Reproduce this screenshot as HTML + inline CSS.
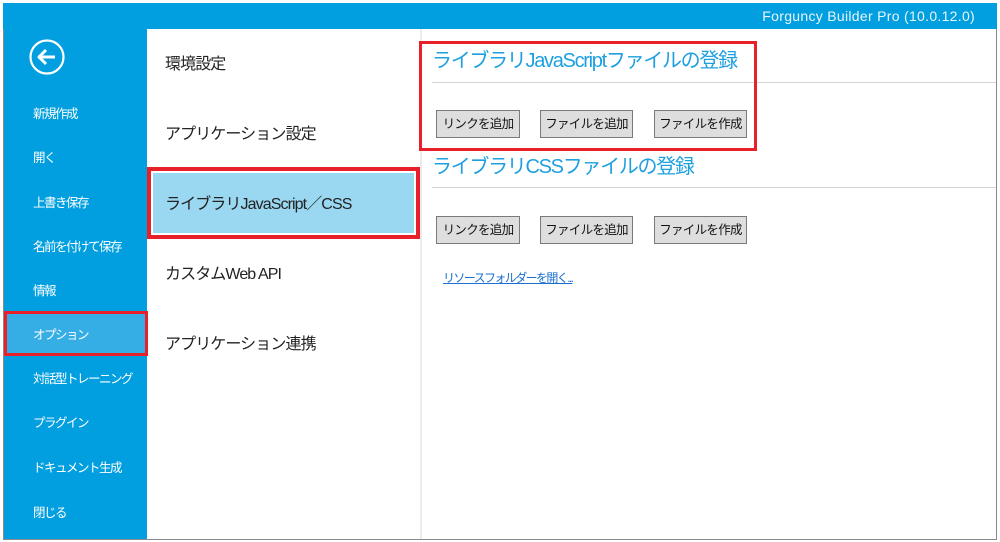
<!DOCTYPE html>
<html><head><meta charset="utf-8"><style>
*{margin:0;padding:0;box-sizing:border-box}
body{width:1000px;height:542px;background:#fff;position:relative;overflow:hidden;font-family:"Liberation Sans","Noto Sans CJK JP",sans-serif}
.frame{position:absolute;left:3px;top:3px;width:994px;height:537px;border:1px solid #8a8a8a;border-top:none;background:#fff}
.top{position:absolute;left:3px;top:3px;width:994px;height:26px;background:#019fdf}
.top span{position:absolute;right:22px;top:5px;color:#e8f6fd;font-size:14px;letter-spacing:0.3px}
.side{position:absolute;left:4px;top:29px;width:143px;height:510px;background:#019fdf}
.si{position:absolute;left:33px;color:#fff;font-size:12.5px;line-height:16px;letter-spacing:-1.5px;white-space:nowrap}
.opt{position:absolute;left:4px;top:311px;width:144px;height:45px;background:#35aee6;border:3px solid #e8202a}
.mid{position:absolute;left:165px;font-size:16px;color:#222;line-height:20px;letter-spacing:-0.9px;white-space:nowrap}
.sel{position:absolute;left:147px;top:167px;width:273px;height:72px;border:4px solid #e8202a}
.sel div{position:absolute;left:2px;top:2px;right:2px;bottom:2px;background:#9ad7f1}
.vline{position:absolute;left:420px;top:29px;width:2px;height:510px;background:#ececec}
.h{position:absolute;left:432px;font-size:20px;color:#1ea0e0;line-height:24px;letter-spacing:-1.3px;white-space:nowrap}
.hl{position:absolute;left:432px;width:564px;height:1px;background:#d4d4d4}
.b{position:absolute;height:28px;background:#dedede;border:1px solid #7a7a7a;font-size:12.5px;color:#111;text-align:center;line-height:26px;letter-spacing:-0.7px;white-space:nowrap}
.red{position:absolute;left:419px;top:41px;width:338px;height:110px;border:3px solid #e8202a}
a{position:absolute;left:443px;top:269px;font-size:12px;color:#1a6fd0;text-decoration:underline;letter-spacing:-1.6px;white-space:nowrap}
</style></head><body>
<div class="frame"></div>
<div class="top"><span>Forguncy Builder Pro (10.0.12.0)</span></div>
<div class="side"></div>
<svg style="position:absolute;left:29px;top:39px" width="36" height="36" viewBox="0 0 36 36"><circle cx="18" cy="18" r="16.5" fill="none" stroke="#fff" stroke-width="2.2"/><path d="M10 18H26M17 11L10 18L17 25" fill="none" stroke="#fff" stroke-width="3" stroke-linejoin="round"/></svg>
<div class="opt"></div>
<div class="si" style="top:106px">新規作成</div>
<div class="si" style="top:150px">開く</div>
<div class="si" style="top:195px">上書き保存</div>
<div class="si" style="top:239px">名前を付けて保存</div>
<div class="si" style="top:283px">情報</div>
<div class="si" style="top:327px">オプション</div>
<div class="si" style="top:371px">対話型トレーニング</div>
<div class="si" style="top:415px">プラグイン</div>
<div class="si" style="top:460px">ドキュメント生成</div>
<div class="si" style="top:505px">閉じる</div>
<div class="sel"><div></div></div>
<div class="mid" style="top:55px">環境設定</div>
<div class="mid" style="top:125px">アプリケーション設定</div>
<div class="mid" style="top:195px">ライブラリJavaScript／CSS</div>
<div class="mid" style="top:265px">カスタムWeb API</div>
<div class="mid" style="top:335px">アプリケーション連携</div>
<div class="vline"></div>
<div class="h" style="top:49px">ライブラリJavaScriptファイルの登録</div>
<div class="hl" style="top:82px"></div>
<div class="b" style="left:436px;top:110px;width:84px">リンクを追加</div>
<div class="b" style="left:540px;top:110px;width:93px">ファイルを追加</div>
<div class="b" style="left:654px;top:110px;width:93px">ファイルを作成</div>
<div class="h" style="top:155px">ライブラリCSSファイルの登録</div>
<div class="hl" style="top:187px"></div>
<div class="b" style="left:436px;top:216px;width:84px">リンクを追加</div>
<div class="b" style="left:540px;top:216px;width:93px">ファイルを追加</div>
<div class="b" style="left:654px;top:216px;width:93px">ファイルを作成</div>
<a>リソースフォルダーを開く...</a>
<div class="red"></div>
</body></html>
